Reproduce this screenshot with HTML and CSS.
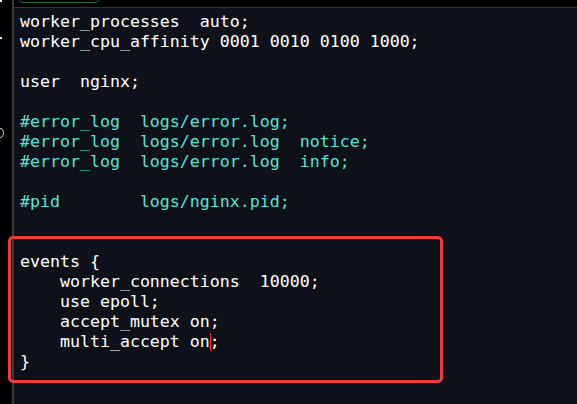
FILE: index.html
```html
<!DOCTYPE html>
<html>
<head>
<meta charset="utf-8">
<link rel="stylesheet" href="styles.css">
</head>
<body>
<div class="app">
  <div class="side">
    <span class="mark mark-top"></span>
    <span class="mark mark-dot"></span>
    <span class="arc"></span>
  </div>
  <div class="right">
    <div class="topbar"><div class="tab"></div></div>
    <div class="editor">
      <div class="code">
        <div class="ln">worker_processes  auto;</div>
        <div class="ln">worker_cpu_affinity 0001 0010 0100 1000;</div>
        <div class="ln"></div>
        <div class="ln">user  nginx;</div>
        <div class="ln"></div>
        <div class="ln cm">#error_log  logs/error.log;</div>
        <div class="ln cm">#error_log  logs/error.log  notice;</div>
        <div class="ln cm">#error_log  logs/error.log  info;</div>
        <div class="ln"></div>
        <div class="ln cm">#pid        logs/nginx.pid;</div>
        <div class="ln"></div>
        <div class="ln"></div>
        <div class="ln">events {</div>
        <div class="ln">    worker_connections  10000;</div>
        <div class="ln">    use epoll;</div>
        <div class="ln">    accept_mutex on;</div>
        <div class="ln">    multi_accept on<span class="caret"></span>;</div>
        <div class="ln">}</div>
      </div>
    </div>
  </div>
</div>
<div class="highlight"></div>
</body>
</html>
```
FILE: styles.css
```css
html, body {
  margin: 0;
  padding: 0;
  background: #000;
  width: 577px;
  height: 404px;
  overflow: hidden;
}

.app {
  display: flex;
  width: 577px;
  height: 404px;
}

.side {
  width: 12px;
  flex: none;
  background: #000;
  border-right: 2px solid #3a3a3a;
  overflow: hidden;
  display: flex;
  flex-direction: column;
}

.mark {
  display: block;
  background: #e8e8e8;
  width: 2px;
  height: 2px;
}
.mark-dot { margin-top: 35px; }

.arc {
  display: block;
  margin-top: 89px;
  margin-left: -4px;
  width: 6px;
  height: 8px;
  border: 1px solid #cfcfcf;
  border-radius: 50%;
}

.right {
  flex: 1;
  display: flex;
  flex-direction: column;
  min-width: 0;
}

.topbar {
  height: 7px;
  flex: none;
  background: #000;
  border-bottom: 1px solid #333;
  overflow: hidden;
}

.tab {
  margin-left: 3px;
  margin-top: -10px;
  width: 84px;
  height: 13px;
  border: 1px solid #2a6a3c;
  border-radius: 0 0 7px 7px;
  box-sizing: border-box;
}

.editor {
  flex: 1;
  background: #0f111a;
  padding: 4px 0 0 6px;
  overflow: hidden;
}

.code {
  font-family: "DejaVu Sans Mono", monospace;
  font-size: 16.6px;
  line-height: 20px;
  color: #ffffff;
}

.ln {
  height: 20px;
  white-space: pre;
}

.cm {
  color: #55e4d2;
}

.caret {
  display: inline-block;
  width: 1.5px;
  height: 18px;
  background: #ff2a2a;
  margin-right: -1.5px;
  vertical-align: -4px;
}

.highlight {
  position: absolute;
  left: 8px;
  top: 236px;
  width: 435px;
  height: 147px;
  box-sizing: border-box;
  border: 3px solid #f23b3b;
  border-radius: 5px;
}
```
